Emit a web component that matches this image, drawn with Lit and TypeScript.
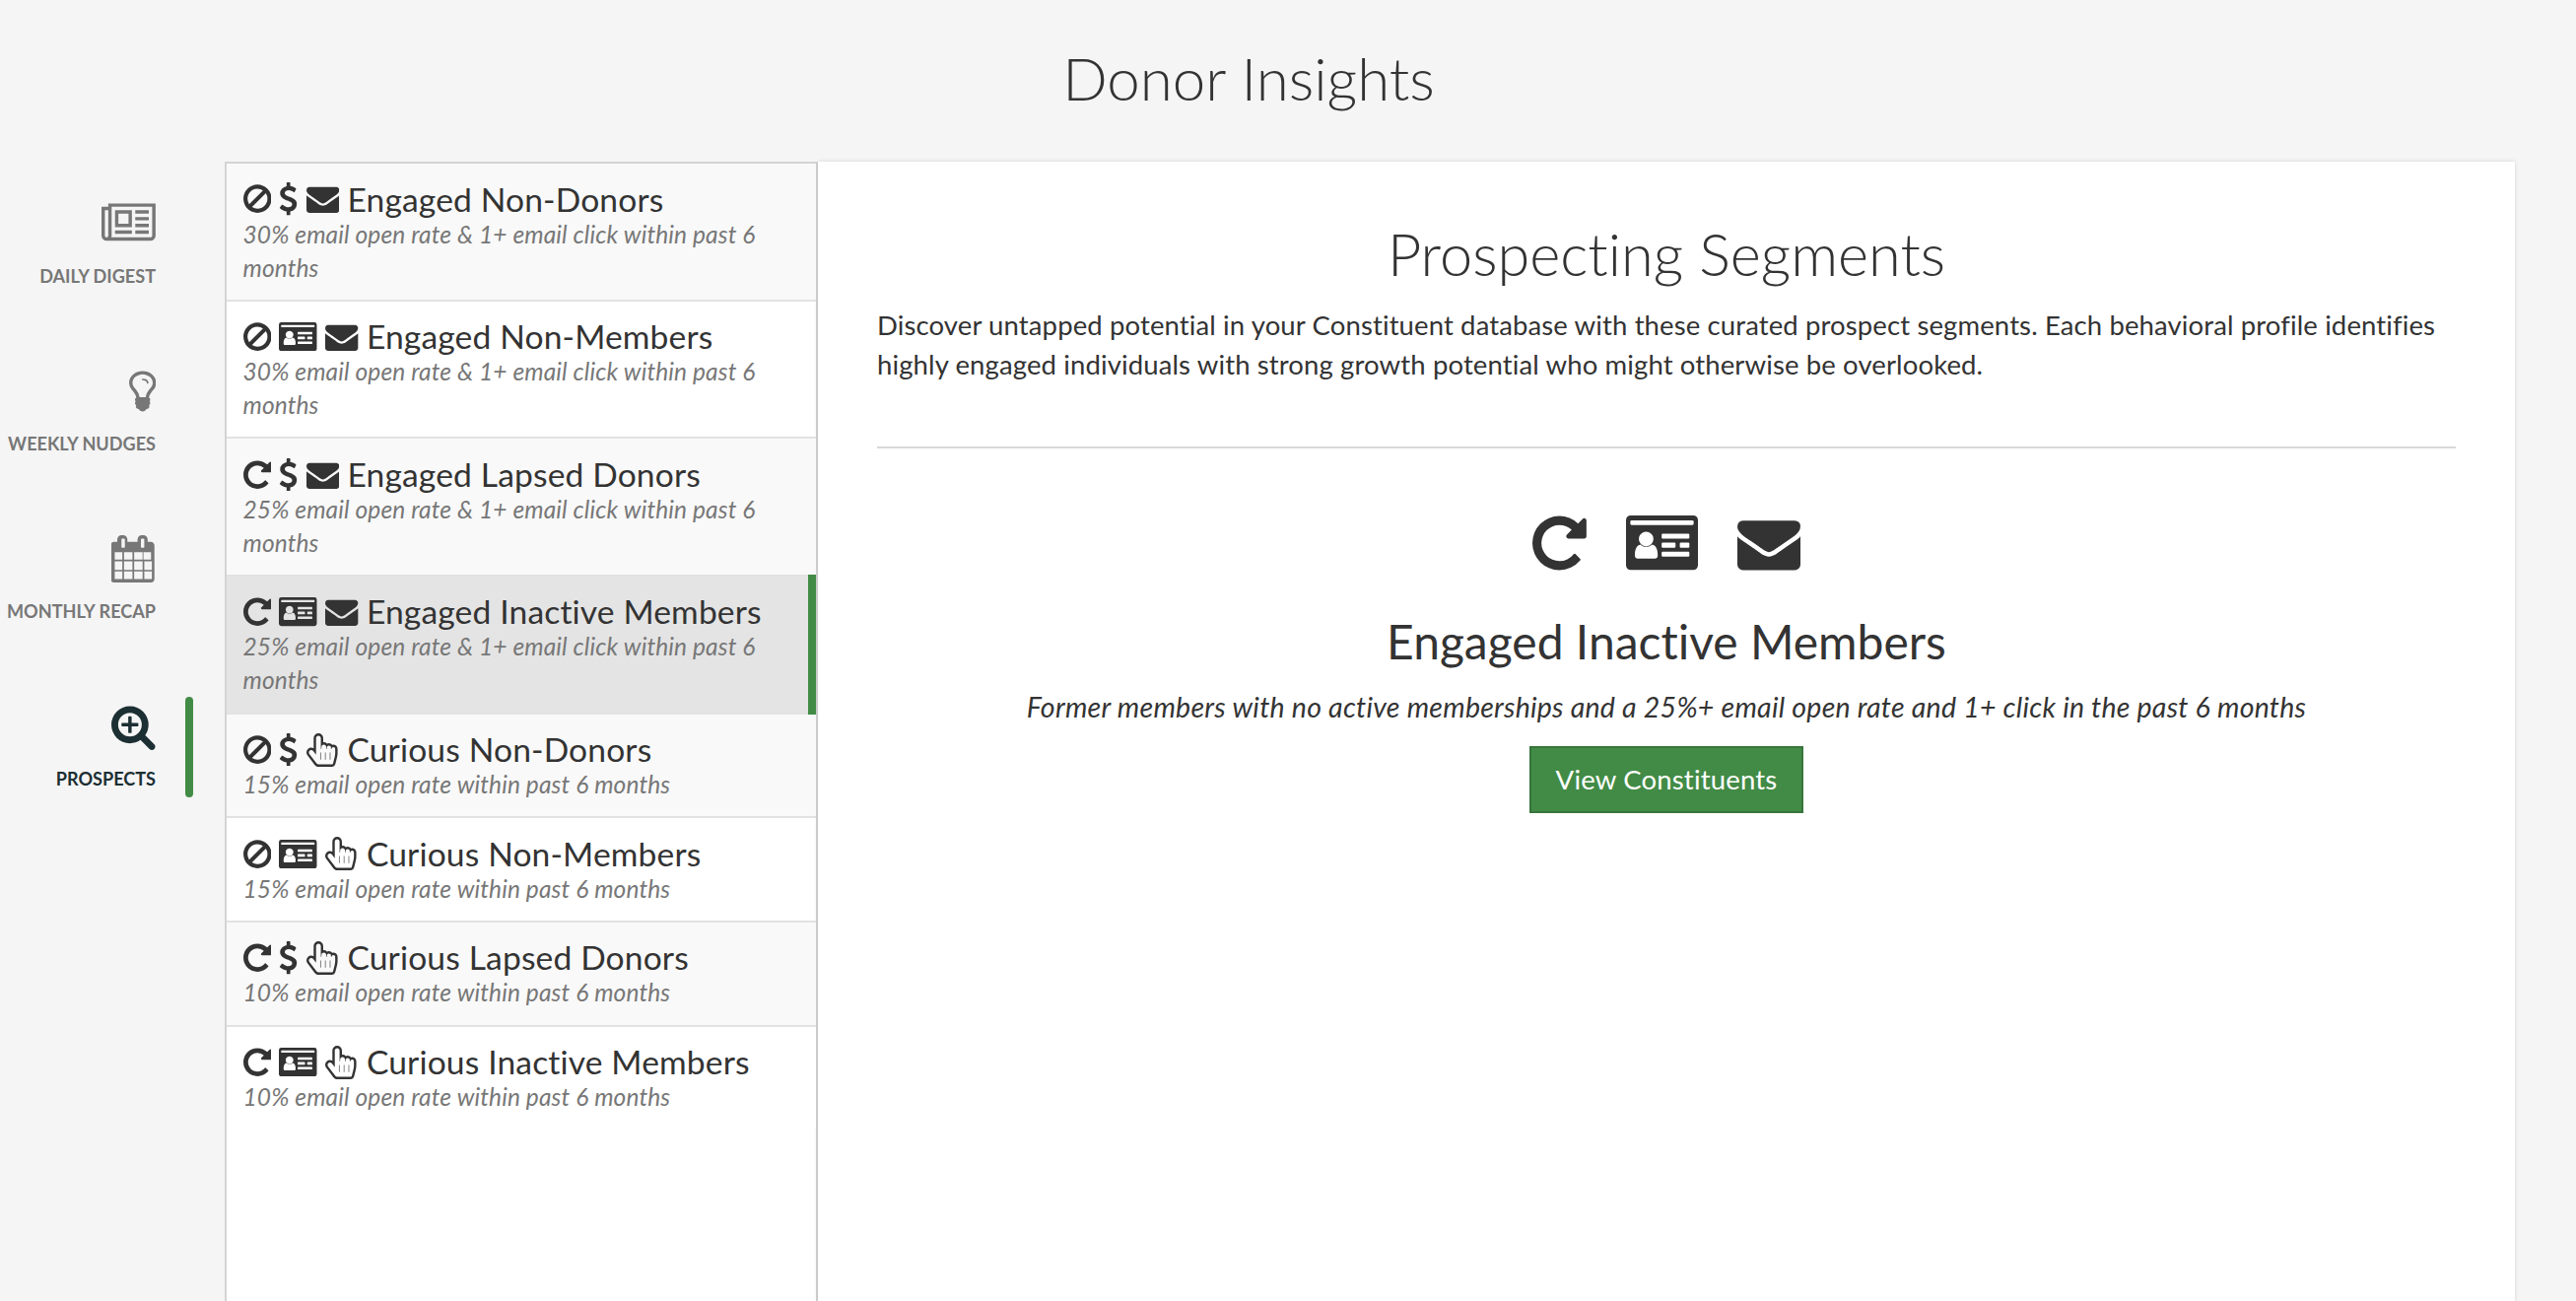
import { LitElement, html, css } from "lit";
import { customElement } from "lit/decorators.js";

const P: Record<string, { vb: string; d: string }> = {
  ban: { vb: "128 0 1536 1792", d: "M1440 893q0-161-87-295l-754 753q137 89 297 89 111 0 211.5-43.5t173.5-116.5 116-174.5 43-212.5zm-999 299l755-754q-135-91-300-91-148 0-273 73t-198 199-73 274q0 162 89 299zm1223-299q0 157-61 300t-163.5 246-245 164-298.5 61-298.5-61-245-164-163.5-246-61-300 61-299.5 163.5-245.5 245-164 298.5-61 298.5 61 245 164 163.5 245.5 61 299.5z" },
  redo: { vb: "128 0 1536 1792", d: "M1664 256v448q0 26-19 45t-45 19h-448q-42 0-59-40-17-39 14-69l138-138q-148-137-349-137-104 0-198.5 40.5t-163.5 109.5-109.5 163.5-40.5 198.5 40.5 198.5 109.5 163.5 163.5 109.5 198.5 40.5q119 0 225-52t179-147q7-10 23-12 15 0 25 9l137 138q9 8 9.5 20.5t-7.5 22.5q-109 132-264 204.5t-327 72.5q-156 0-298-61t-245-164-164-245-61-298 61-298 164-245 245-164 298-61q147 0 284.5 55.5t244.5 156.5l130-129q29-31 70-14 39 17 39 59z" },
  usd: { vb: "384 0 1024 1792", d: "M1362 1185q0 153-99.5 263.5t-258.5 136.5v175q0 14-9 23t-23 9h-135q-13 0-22.5-9.5t-9.5-22.5v-175q-66-9-127.5-31t-101.5-44.5-74-48-46.5-37.5-17.5-18q-17-21-2-41l103-135q7-10 23-12 15-2 24 9l2 2q113 99 243 125 37 8 74 8 81 0 142.5-43t61.5-122q0-28-15-53t-33.5-42-58.5-37.5-66-32-80-32.5q-39-16-61.5-25t-61.5-26.5-62.5-31-56.5-35.5-53.5-42.5-43.5-49-35.5-58-21-66.5-8.5-78q0-138 98-242t255-134v-180q0-13 9.5-22.5t22.5-9.5h135q14 0 23 9t9 23v176q57 6 110.5 23t87 33.5 63.5 37.5 39 29 15 14q17 18 5 38l-81 146q-8 15-23 16-14 3-27-7-3-3-14.5-12t-39-26.5-58.5-32-74.5-26-85.5-11.5q-95 0-155 43t-60 111q0 26 8.5 48t29.5 41.5 39.5 33 56 31 60.5 27 70 27.5q53 20 81 31.5t76 35 75.5 42.5 62 50 53 63.5 31.5 76.5 13 94z" },
  mail: { vb: "0 0 1792 1792", d: "M1792 710v794q0 66-47 113t-113 47h-1472q-66 0-113-47t-47-113v-794q44 49 101 87 362 246 497 345 57 42 92.5 65.5t94.5 48 110 24.5h2q51 0 110-24.5t94.5-48 92.5-65.5q170-123 498-345 57-39 100-87zm0-294q0 79-49 151t-122 123q-376 261-468 325-10 7-42.5 30.5t-54 38-52 32.5-57.5 27-50 9h-2q-23 0-50-9t-57.5-27-52-32.5-54-38-42.5-30.5q-91-64-262-182.5t-205-142.5q-62-42-117-115.5t-55-136.5q0-78 41.5-130t118.5-52h1472q65 0 112.5 47t47.5 113z" },
  hand: { vb: "0 0 1664 1792", d: "M640 128q-53 0-90.5 37.5t-37.5 90.5v512 384l-151-202q-41-54-107-54-52 0-89 38t-37 90q0 43 26 77l384 512q38 51 102 51h718q22 0 39.5-13.5t22.5-34.5l92-368q24-96 24-194v-217q0-41-28-71t-68-30-68 28-28 68h-32v-61q0-48-32-81.5t-80-33.5q-46 0-79 33t-33 79v64h-32v-90q0-55-37-94.5t-91-39.5q-53 0-90.5 37.5t-37.5 90.5v96h-32v-570q0-55-37-94.5t-91-39.5zm0-128q107 0 181.5 77.5t74.5 184.5v220q22-2 32-2 99 0 173 69 47-21 99-21 113 0 184 87 27-7 56-7 94 0 159 67.5t65 161.5v217q0 116-28 225l-92 368q-16 64-68 104.5t-118 40.5h-718q-60 0-114.5-27.5t-90.5-74.5l-384-512q-51-68-51-154 0-105 74.5-180.5t179.5-75.5q71 0 130 35v-547q0-106 75-181t181-75zm128 1408v-384h-32v384h32zm256 0v-384h-32v384h32zm256 0v-384h-32v384h32z" },
  card: { vb: "0 0 218 165", d: "M14 0H204A14 14 0 0 1 218 14V151A14 14 0 0 1 204 165H14A14 14 0 0 1 0 151V14A14 14 0 0 1 14 0ZM17 15a4 4 0 0 0-4 4v6a4 4 0 0 0 4 4H201a4 4 0 0 0 4-4v-6a4 4 0 0 0-4-4ZM111 55a3 3 0 0 0-3 3v9a3 3 0 0 0 3 3H189a3 3 0 0 0 3-3v-9a3 3 0 0 0-3-3ZM111 82a3 3 0 0 0-3 3v10a3 3 0 0 0 3 3H147a3 3 0 0 0 3-3V85a3 3 0 0 0-3-3ZM166 82a3 3 0 0 0-3 3v10a3 3 0 0 0 3 3H189a3 3 0 0 0 3-3V85a3 3 0 0 0-3-3ZM111 110a3 3 0 0 0-3 3v9a3 3 0 0 0 3 3H189a3 3 0 0 0 3-3v-9a3 3 0 0 0-3-3ZM61 49a22 22 0 1 0 .01 0ZM44 88c-11 2-17 14-17 30v4c0 6 3 9 9 9H87c6 0 9-3 9-9v-4c0-16-6-28-17-30-5 5-11 7-18 7s-13-2-17-7Z" },
  news: { vb: "0 0 2048 1792", d: "M1024 512h-384v384h384v-384zm128 640v128h-640v-128h640zm0-768v640h-640v-640h640zm640 768v128h-512v-128h512zm0-256v128h-512v-128h512zm0-256v128h-512v-128h512zm0-256v128h-512v-128h512zm-1536 960v-960h-128v960q0 26 19 45t45 19 45-19 19-45zm1664 0v-1088h-1536v1088q0 33-11 64h1483q26 0 45-19t19-45zm128-1216v1216q0 80-56 136t-136 56h-1664q-80 0-136-56t-56-136v-1088h256v-128h1792z" },
  bulb: { vb: "384 0 1024 1792", d: "M1120 576q0 13-9.5 22.5t-22.5 9.5-22.5-9.5-9.5-22.5q0-46-54-71t-106-25q-13 0-22.5-9.5t-9.5-22.5 9.5-22.5 22.5-9.5q50 0 99.5 16t87 54 37.5 90zm160 0q0-72-34.5-134t-90-101.5-123-62-136.5-22.5-136.5 22.5-123 62-90 101.5-34.5 134q0 101 68 180 10 11 30.5 33t30.5 33q128 153 141 298h228q13-145 141-298 10-11 30.5-33t30.5-33q68-79 68-180zm128 0q0 155-103 268-45 49-74.5 87t-59.5 95.5-34 107.5q47 28 47 82 0 37-25 64 25 27 25 64 0 52-45 81 13 23 13 47 0 46-31.5 71t-77.5 25q-20 44-60 70t-87 26-87-26-60-70q-46 0-77.5-25t-31.5-71q0-24 13-47-45-29-45-81 0-37 25-64-25-27-25-64 0-54 47-82-4-50-34-107.5t-59.5-95.5-74.5-87q-103-113-103-268 0-99 44.5-184.5t117-142 164-89 186.5-32.5 186.5 32.5 164 89 117 142 44.5 184.5z" },
  cal: { vb: "64 0 1664 1792", d: "M192 1664h288v-288h-288v288zm352 0h320v-288h-320v288zm-352-352h288v-320h-288v320zm352 0h320v-320h-320v320zm-352-384h288v-288h-288v288zm736 736h320v-288h-320v288zm-384-736h320v-288h-320v288zm768 736h288v-288h-288v288zm-384-352h320v-320h-320v320zm-352-864v-288q0-13-9.5-22.5t-22.5-9.5h-64q-13 0-22.5 9.5t-9.5 22.5v288q0 13 9.5 22.5t22.5 9.5h64q13 0 22.5-9.5t9.5-22.5zm736 864h288v-320h-288v320zm-384-384h320v-288h-320v288zm352 0h288v-288h-288v288zm32-480v-288q0-13-9.5-22.5t-22.5-9.5h-64q-13 0-22.5 9.5t-9.5 22.5v288q0 13 9.5 22.5t22.5 9.5h64q13 0 22.5-9.5t9.5-22.5zm384-64v1280q0 52-38 90t-90 38h-1408q-52 0-90-38t-38-90v-1280q0-52 38-90t90-38h128v-96q0-66 47-113t113-47h64q66 0 113 47t47 113v96h384v-96q0-66 47-113t113-47h64q66 0 113 47t47 113v96h128q52 0 90 38t38 90z" },
  search: { vb: "64 0 1664 1792", d: "M1088 800v64q0 13-9.5 22.5t-22.5 9.5h-224v224q0 13-9.5 22.5t-22.5 9.5h-64q-13 0-22.5-9.5t-9.5-22.5v-224h-224q-13 0-22.5-9.5t-9.5-22.5v-64q0-13 9.5-22.5t22.5-9.5h224v-224q0-13 9.5-22.5t22.5-9.5h64q13 0 22.5 9.5t9.5 22.5v224h224q13 0 22.5 9.5t9.5 22.5zm128 32q0-185-131.5-316.5t-316.5-131.5-316.5 131.5-131.5 316.5 131.5 316.5 316.5 131.5 316.5-131.5 131.5-316.5zm512 832q0 53-37.5 90.5t-90.5 37.5q-54 0-90-38l-343-342q-179 124-399 124-143 0-273.5-55.5t-225-150-150-225-55.5-273.5 55.5-273.5 150-225 225-150 273.5-55.5 273.5 55.5 225 150 150 225 55.5 273.5q0 220-124 399l343 343q37 37 37 90z" },
};

const icon = (n: string) =>
  html`<svg class="ic ic-${n}" viewBox=${P[n].vb} fill-rule="evenodd" preserveAspectRatio="xMinYMid meet"><path d=${P[n].d}></path></svg>`;

const NAV = [
  { icon: "news", label: "DAILY DIGEST" },
  { icon: "bulb", label: "WEEKLY NUDGES" },
  { icon: "cal", label: "MONTHLY RECAP" },
  { icon: "search", label: "PROSPECTS", active: true },
];

const ENG25 = "25% email open rate & 1+ email click within past 6 months";
const ENG30 = "30% email open rate & 1+ email click within past 6 months";
const ROWS = [
  { i: ["ban", "usd", "mail"], t: "Engaged Non-Donors", s: ENG30 },
  { i: ["ban", "card", "mail"], t: "Engaged Non-Members", s: ENG30 },
  { i: ["redo", "usd", "mail"], t: "Engaged Lapsed Donors", s: ENG25 },
  { i: ["redo", "card", "mail"], t: "Engaged Inactive Members", s: ENG25, active: true },
  { i: ["ban", "usd", "hand"], t: "Curious Non-Donors", s: "15% email open rate within past 6 months" },
  { i: ["ban", "card", "hand"], t: "Curious Non-Members", s: "15% email open rate within past 6 months" },
  { i: ["redo", "usd", "hand"], t: "Curious Lapsed Donors", s: "10% email open rate within past 6 months" },
  { i: ["redo", "card", "hand"], t: "Curious Inactive Members", s: "10% email open rate within past 6 months" },
];

@customElement("app-root")
export class AppRoot extends LitElement {
  static styles = css`
    :host {
      display: flex;
      flex-direction: column;
      height: 100vh;
      overflow: hidden;
      background: #f5f5f5;
      color: #333;
      font-family: "Lato", sans-serif;
      font-size: 27.5px;
      letter-spacing: 0.12px;
      line-height: 40px;
      font-variant-ligatures: none;
    }
    svg { display: block; fill: currentColor; flex: none; }
    .top {
      flex: none;
      height: 164px;
      box-sizing: border-box;
      padding: 45.5px 80px 0 0;
      text-align: center;
      font-size: 60px;
      letter-spacing: 0;
      line-height: 66px;
      font-weight: 300;
    }
    .body { flex: 1; display: flex; min-height: 0; }
    .nav {
      flex: none;
      width: 228px;
      box-sizing: border-box;
      padding: 38.5px 70px 0 0;
      display: flex;
      flex-direction: column;
    }
    .nav-item {
      position: relative;
      height: 170px;
      display: flex;
      flex-direction: column;
      align-items: flex-end;
      color: #777;
    }
    .nav-item.on { color: #1c2f33; }
    .nav-label {
      margin-top: 17px;
      font-size: 18.1px;
      letter-spacing: 0;
      line-height: 24px;
      font-weight: 700;
      white-space: nowrap;
    }
    .pill {
      position: absolute;
      right: -38px;
      top: -5.5px;
      width: 8px;
      height: 102px;
      border-radius: 4px;
      background: #428b46;
    }
    .list {
      flex: none;
      width: 602px;
      box-sizing: border-box;
      background: #fff;
      border: 2px solid #d4d4d4;
      border-bottom: 0;
    }
    .row {
      position: relative;
      box-sizing: border-box;
      padding: 17.5px 16.5px 15.17px;
      border-bottom: 2px solid #e2e2e2;
    }
    .row:nth-child(odd) { background: #f9f9f9; }
    .row:last-child { border-bottom: 0; background: #fff; }
    .row.on { background: #e4e4e4; }
    .row.on::after {
      content: "";
      position: absolute;
      top: -2px;
      right: 0;
      bottom: -2px;
      width: 8px;
      background: #428b46;
    }
    .rt {
      display: flex;
      align-items: center;
      gap: 8.33px;
      font-size: 33.6px;
      letter-spacing: 0.15px;
      line-height: 37px;
      white-space: nowrap;
    }
    .rs {
      font-size: 24.5px;
      letter-spacing: 0.12px;
      line-height: 34px;
      font-style: italic;
      color: #777;
    }
    .main {
      flex: none;
      width: 1722px;
      box-sizing: border-box;
      background: #fff;
      box-shadow: 0 0 4px rgba(0, 0, 0, 0.14);
      padding: 60px 60px 0;
    }
    h2 {
      margin: 0 0 20px;
      font-size: 59.5px;
      letter-spacing: 0;
      line-height: 66px;
      font-weight: 300;
      text-align: center;
    }
    p { margin: 0; }
    hr {
      border: 0;
      height: 2px;
      background: #d8d8d8;
      margin: 63px 0 64px;
    }
    .big { display: flex; justify-content: center; align-items: center; gap: 40px; height: 64px; }
    h3 {
      margin: 40px 0 19px;
      font-size: 48px;
      letter-spacing: 0;
      line-height: 55px;
      font-weight: 400;
      text-align: center;
    }
    .desc { font-size: 28.5px; letter-spacing: 0.25px; font-style: italic; text-align: center; }
    .cta { display: flex; justify-content: center; margin-top: 20px; }
    .btn {
      width: 278px;
      height: 68px;
      box-sizing: border-box;
      border: 2px solid #38753c;
      background: #428b46;
      color: #fff;
      font: inherit;
      letter-spacing: 0.18px;
      padding: 0;
    }
    .rt .ic-ban, .rt .ic-redo { width: 28.57px; height: 33.33px; }
    .rt .ic-usd { width: 19.05px; height: 33.33px; }
    .rt .ic-mail { width: 33.33px; height: 33.33px; }
    .rt .ic-card { width: 38.5px; height: 29.14px; }
    .rt .ic-hand { width: 33.33px; height: 34px; }
    .big .ic-redo { width: 54.86px; height: 64px; }
    .big .ic-card { width: 73px; height: 55.25px; }
    .big .ic-mail { width: 64px; height: 64px; }
    .nav .ic { height: 48px; }
    .nav .ic-news { width: 54.86px; }
    .nav .ic-bulb { width: 27.43px; }
    .nav .ic-cal, .nav .ic-search { width: 44.57px; }
  `;

  render() {
    return html`
      <div class="top">Donor Insights</div>
      <div class="body">
        <nav class="nav">
          ${NAV.map(
            (n) => html`<div class="nav-item ${n.active ? "on" : ""}">
              ${icon(n.icon)}
              <div class="nav-label">${n.label}</div>
              ${n.active ? html`<div class="pill"></div>` : ""}
            </div>`
          )}
        </nav>
        <div class="list">
          ${ROWS.map(
            (r) => html`<div class="row ${r.active ? "on" : ""}">
              <div class="rt">${r.i.map(icon)}<span>${r.t}</span></div>
              <div class="rs">${r.s}</div>
            </div>`
          )}
        </div>
        <main class="main">
          <h2>Prospecting Segments</h2>
          <p>Discover untapped potential in your Constituent database with these curated prospect segments. Each behavioral profile identifies highly engaged individuals with strong growth potential who might otherwise be overlooked.</p>
          <hr />
          <div class="big">${icon("redo")}${icon("card")}${icon("mail")}</div>
          <h3>Engaged Inactive Members</h3>
          <div class="desc">Former members with no active memberships and a 25%+ email open rate and 1+ click in the past 6 months</div>
          <div class="cta"><button class="btn">View Constituents</button></div>
        </main>
      </div>
    `;
  }
}
